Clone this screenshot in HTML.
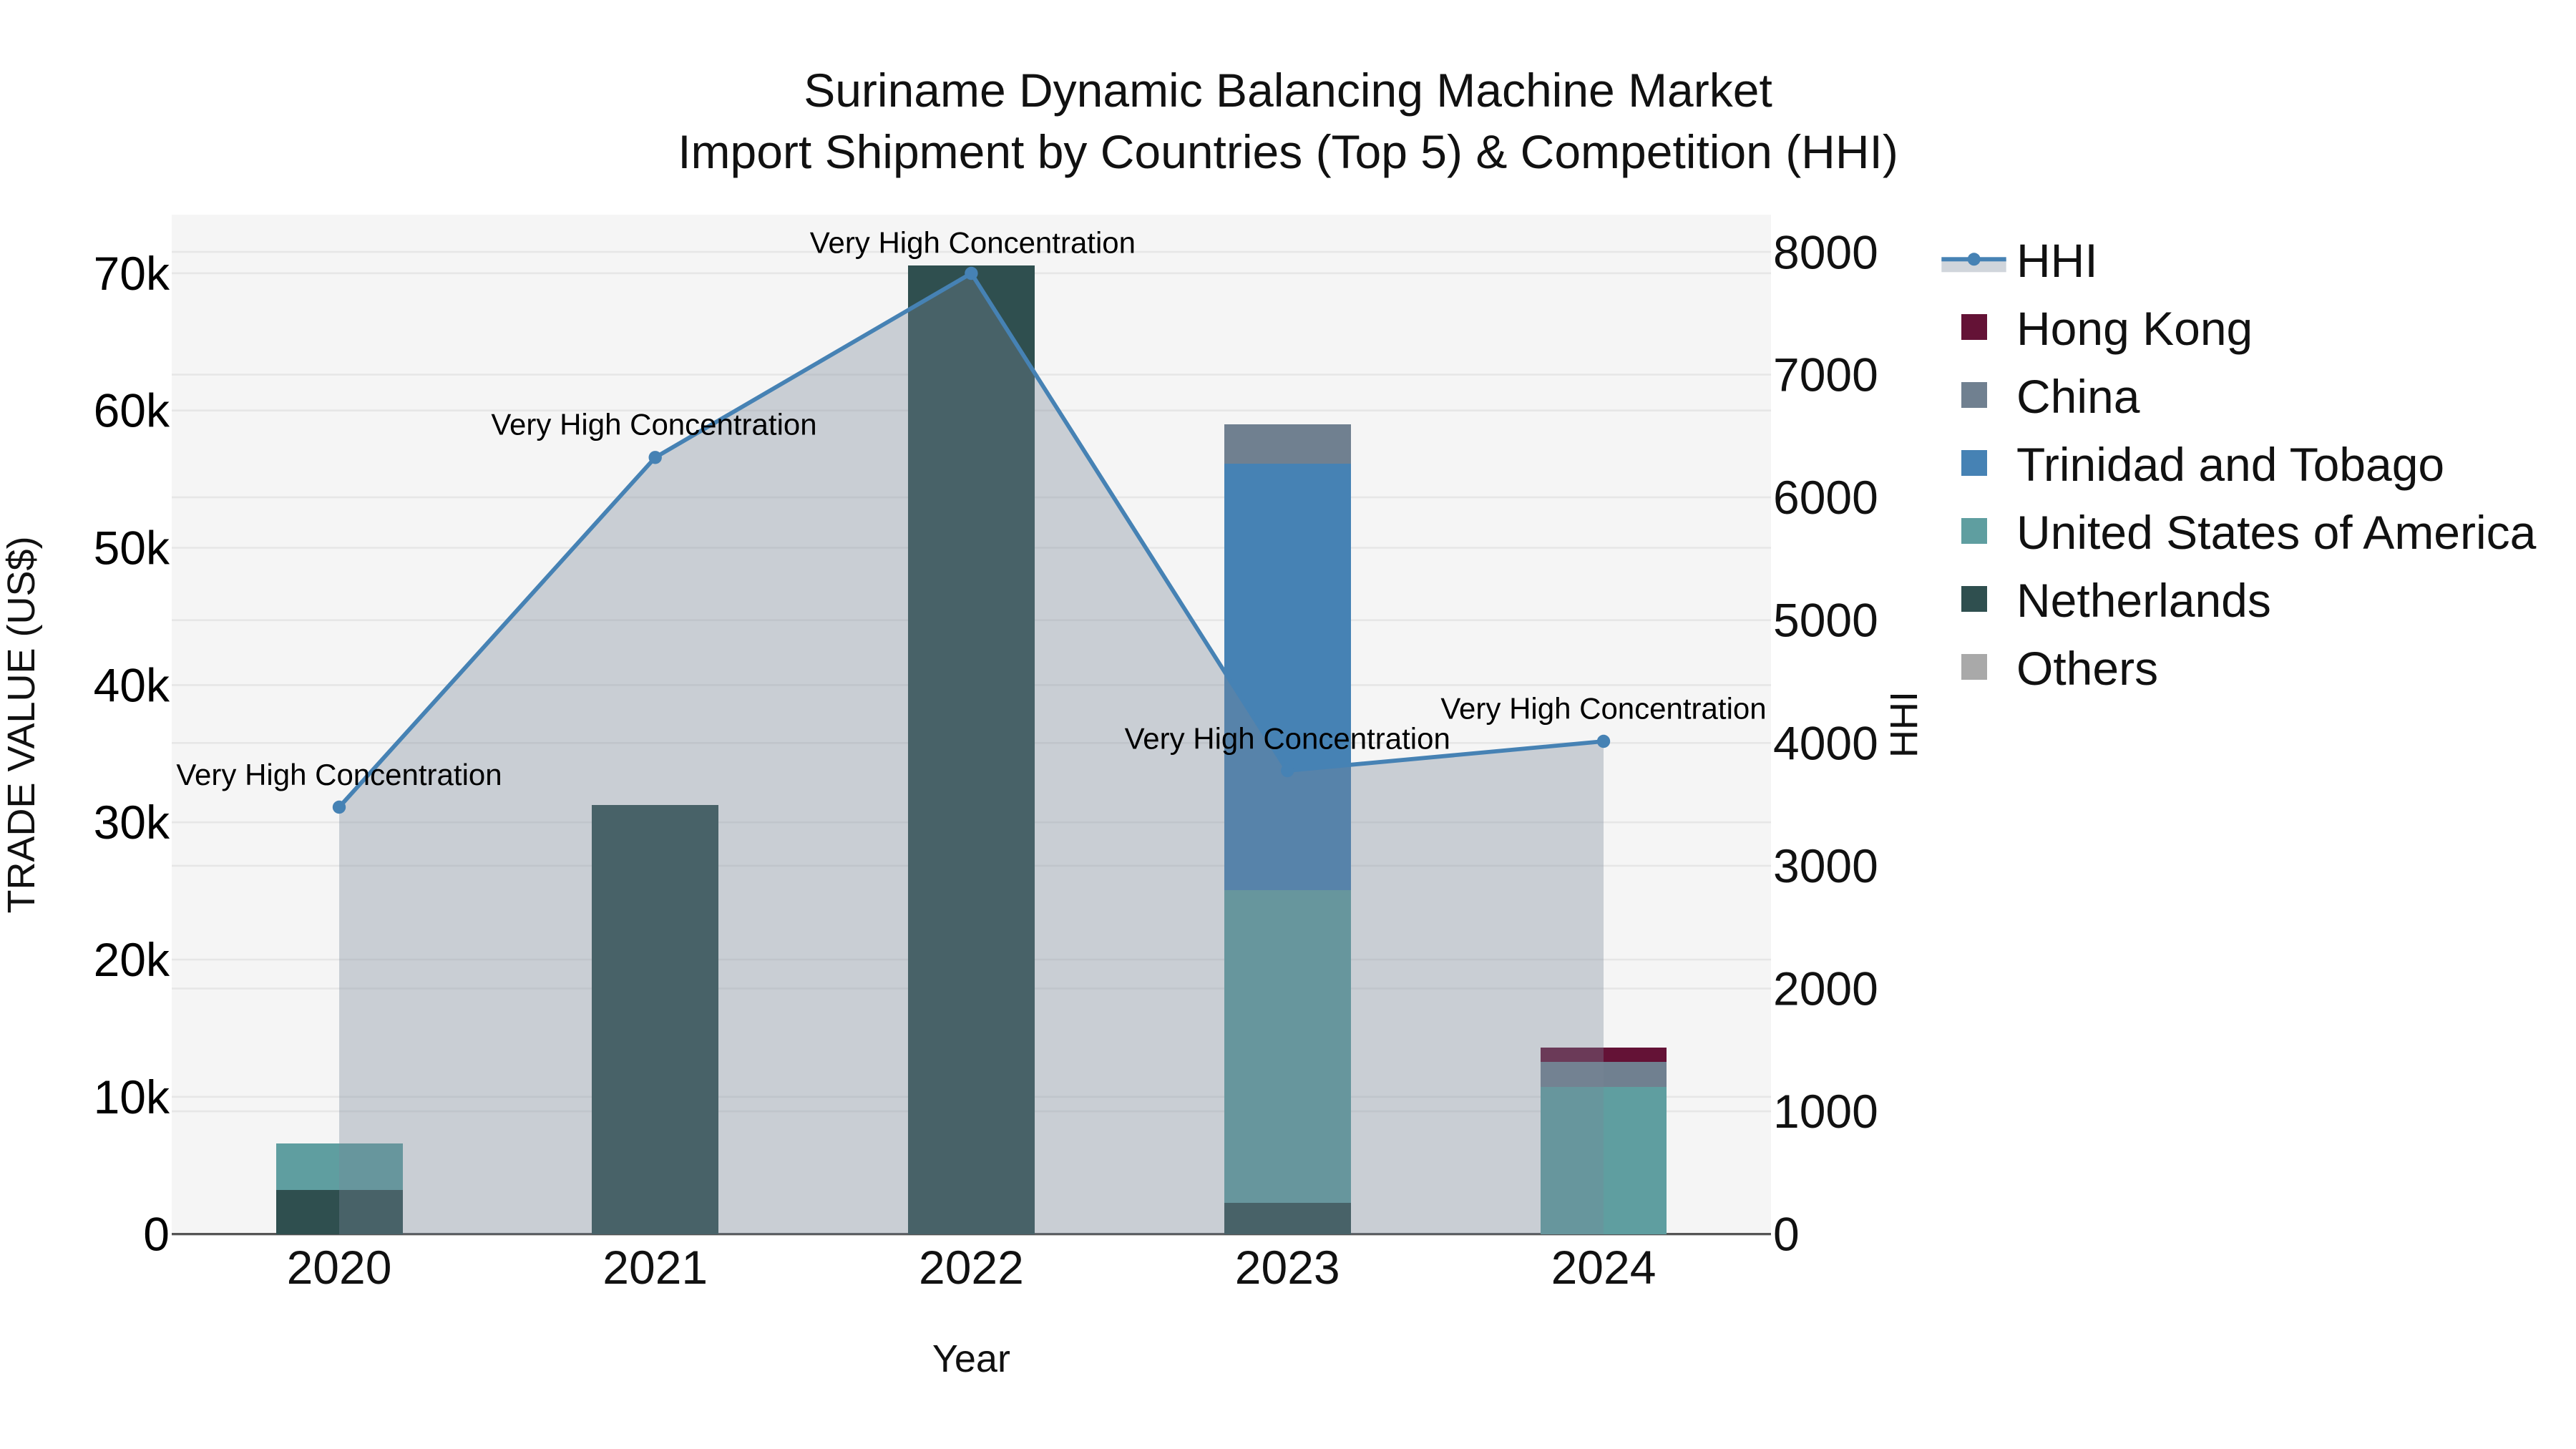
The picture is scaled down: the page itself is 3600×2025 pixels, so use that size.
<!DOCTYPE html>
<html lang="en">
<head>
<meta charset="utf-8">
<title>Suriname Dynamic Balancing Machine Market</title>
<style>
html,body{margin:0;padding:0;background:#fff;width:3600px;height:2025px;overflow:hidden}
svg{display:block}
text{font-family:"Liberation Sans",Arial,sans-serif;white-space:pre}
.tl{font-size:66px;fill:#000;text-anchor:end}
.tr{font-size:66px;fill:#111}
.tx{font-size:66px;fill:#111;text-anchor:middle}
.lg{font-size:66px;fill:#111}
.an{font-size:42px;fill:#000;text-anchor:middle}
.ax{font-size:54px;fill:#111}
.ti{font-size:66px;fill:#111;text-anchor:middle}
</style>
</head>
<body>
<svg width="3600" height="2025" viewBox="0 0 3600 2025" xmlns="http://www.w3.org/2000/svg">
<rect width="3600" height="2025" fill="#fff"/>
<rect x="240" y="300" width="2235" height="1425" fill="#f5f5f5"/>

<!-- grid -->
<g stroke="#e6e6e6" stroke-width="2.6" fill="none">
<path d="M240 1532.8H2475M240 1341H2475M240 1149.2H2475M240 957.4H2475M240 765.5H2475M240 573.7H2475M240 381.8H2475"/>
<path d="M240 1553.1H2475M240 1381.5H2475M240 1209.9H2475M240 1038.3H2475M240 866.7H2475M240 695.1H2475M240 523.5H2475M240 352H2475"/>
</g>
<rect x="240" y="1723" width="2235" height="3.3" fill="#555"/>

<!-- bars -->
<g shape-rendering="crispEdges">
<rect x="386" y="1663" width="177" height="62" fill="#2f4f4f"/>
<rect x="386" y="1598" width="177" height="65" fill="#5f9ea0"/>
<rect x="827" y="1125" width="177" height="600" fill="#2f4f4f"/>
<rect x="1269" y="371" width="177" height="1354" fill="#2f4f4f"/>
<rect x="1711" y="1681" width="177" height="44" fill="#2f4f4f"/>
<rect x="1711" y="1244" width="177" height="437" fill="#5f9ea0"/>
<rect x="1711" y="648" width="177" height="596" fill="#4682b4"/>
<rect x="1711" y="593" width="177" height="55" fill="#708090"/>
<rect x="2153" y="1519" width="176" height="206" fill="#5f9ea0"/>
<rect x="2153" y="1484" width="176" height="35" fill="#708090"/>
<rect x="2153" y="1464" width="176" height="20" fill="#641236"/>
</g>

<!-- HHI area and line -->
<path d="M474 1725L474 1128L915.7 639.3L1357.4 382L1799.2 1077L2241 1036L2241 1725Z" fill="rgba(119,136,153,.35)"/>
<path d="M474 1128L915.7 639.3L1357.4 382L1799.2 1077L2241 1036" fill="none" stroke="#4682b4" stroke-width="5.8" stroke-linejoin="round"/>
<g fill="#4682b4">
<circle cx="474" cy="1128" r="9.2"/>
<circle cx="915.7" cy="639.3" r="9.2"/>
<circle cx="1357.4" cy="382" r="9.2"/>
<circle cx="1799.2" cy="1077" r="9.2"/>
<circle cx="2241" cy="1036" r="9.2"/>
</g>

<!-- annotations -->
<text class="an" x="474" y="1097">Very High Concentration</text>
<text class="an" x="914" y="607.5">Very High Concentration</text>
<text class="an" x="1359.4" y="353.3">Very High Concentration</text>
<text class="an" x="1799.2" y="1046.4">Very High Concentration</text>
<text class="an" x="2241" y="1004.6">Very High Concentration</text>

<!-- title -->
<text class="ti" x="1800" y="149">Suriname Dynamic Balancing Machine Market</text>
<text class="ti" x="1800" y="235">Import Shipment by Countries (Top 5) &amp; Competition (HHI)</text>

<!-- left ticks -->
<text class="tl" x="237" y="1747.7">0</text>
<text class="tl" x="237" y="1555.9">10k</text>
<text class="tl" x="237" y="1364.1">20k</text>
<text class="tl" x="237" y="1172.2">30k</text>
<text class="tl" x="237" y="980.4">40k</text>
<text class="tl" x="237" y="788.5">50k</text>
<text class="tl" x="237" y="596.7">60k</text>
<text class="tl" x="237" y="404.8">70k</text>

<!-- right ticks -->
<text class="tr" x="2478" y="1747.7">0</text>
<text class="tr" x="2478" y="1576.1">1000</text>
<text class="tr" x="2478" y="1404.5">2000</text>
<text class="tr" x="2478" y="1232.9">3000</text>
<text class="tr" x="2478" y="1061.3">4000</text>
<text class="tr" x="2478" y="889.7">5000</text>
<text class="tr" x="2478" y="718.1">6000</text>
<text class="tr" x="2478" y="546.5">7000</text>
<text class="tr" x="2478" y="375.5">8000</text>

<!-- x ticks -->
<text class="tx" x="474" y="1794">2020</text>
<text class="tx" x="915.7" y="1794">2021</text>
<text class="tx" x="1357.4" y="1794">2022</text>
<text class="tx" x="1799.2" y="1794">2023</text>
<text class="tx" x="2241" y="1794">2024</text>

<!-- axis titles -->
<text class="ax" x="1357.4" y="1917" text-anchor="middle">Year</text>
<text class="ax" text-anchor="middle" transform="translate(48 1013) rotate(-90)">TRADE VALUE (US$)</text>
<text class="ax" text-anchor="middle" transform="translate(2679 1012.5) rotate(-90)">HHI</text>

<!-- legend -->
<rect x="2713.3" y="362" width="90.4" height="18.3" fill="rgba(119,136,153,.35)"/>
<rect x="2713.3" y="359.3" width="90.4" height="6" fill="#4682b4"/>
<circle cx="2758.7" cy="362.3" r="9" fill="#4682b4"/>
<g shape-rendering="crispEdges">
<rect x="2741" y="439" width="36" height="36" fill="#641236"/>
<rect x="2741" y="534" width="36" height="36" fill="#708090"/>
<rect x="2741" y="629" width="36" height="36" fill="#4682b4"/>
<rect x="2741" y="724" width="36" height="36" fill="#5f9ea0"/>
<rect x="2741" y="819" width="36" height="36" fill="#2f4f4f"/>
<rect x="2741" y="914" width="36" height="36" fill="#a9a9a9"/>
</g>
<text class="lg" x="2818" y="387">HHI</text>
<text class="lg" x="2818" y="482">Hong Kong</text>
<text class="lg" x="2818" y="577">China</text>
<text class="lg" x="2818" y="672">Trinidad and Tobago</text>
<text class="lg" x="2818" y="767">United States of America</text>
<text class="lg" x="2818" y="862">Netherlands</text>
<text class="lg" x="2818" y="957">Others</text>
</svg>
</body>
</html>
